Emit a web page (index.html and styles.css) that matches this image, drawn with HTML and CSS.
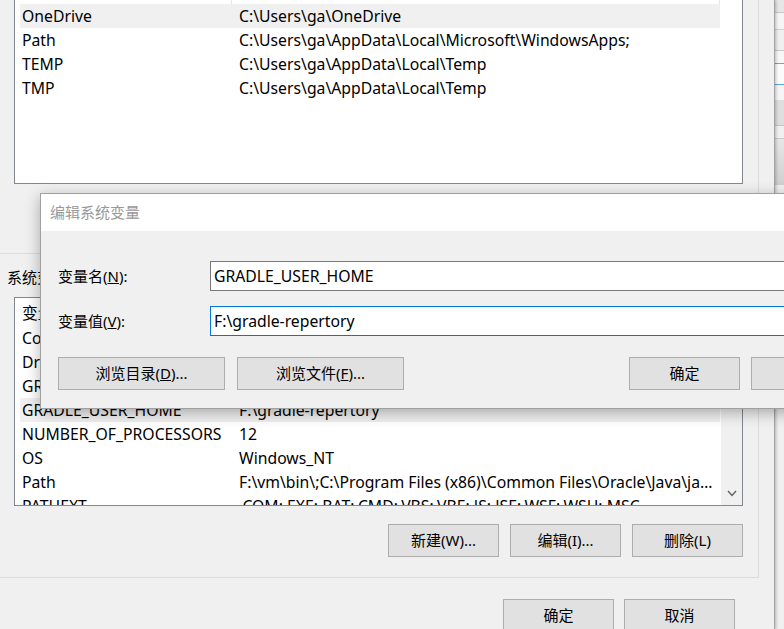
FILE: index.html
```html
<!DOCTYPE html>
<html lang="zh-CN">
<head>
<meta charset="UTF-8" />
<title>环境变量</title>
<link rel="stylesheet" href="styles.css">
</head>
<body>

<div class="screen">
  <div class="win">
    <div class="group group-user">
      <div class="list">
        <div class="list-body">
          <div class="list-head"><span class="c1">变量</span><span class="c2">值</span></div>
          <div class="row sel"><span class="c1">OneDrive</span><span class="c2">C:\Users\ga\OneDrive</span></div>
          <div class="row"><span class="c1">Path</span><span class="c2">C:\Users\ga\AppData\Local\Microsoft\WindowsApps;</span></div>
          <div class="row"><span class="c1">TEMP</span><span class="c2">C:\Users\ga\AppData\Local\Temp</span></div>
          <div class="row"><span class="c1">TMP</span><span class="c2">C:\Users\ga\AppData\Local\Temp</span></div>
        </div>
      </div>
      <div class="btn-row">
        <button class="btn">新建(N)...</button>
        <button class="btn">编辑(E)...</button>
        <button class="btn">删除(D)</button>
      </div>
    </div>

    <div class="group group-sys">
      <div class="group-label">系统变量(<u>S</u>)</div>
      <div class="list">
        <div class="list-body">
          <div class="list-head"><span class="c1">变量</span><span class="c2">值</span></div>
          <div class="row"><span class="c1">ComSpec</span><span class="c2">C:\Windows\system32\cmd.exe</span></div>
          <div class="row"><span class="c1">DriverData</span><span class="c2">C:\Windows\System32\Drivers\DriverData</span></div>
          <div class="row"><span class="c1">GRADLE_HOME</span><span class="c2">F:\gradle-6.5</span></div>
          <div class="row sel"><span class="c1">GRADLE_USER_HOME</span><span class="c2">F:\gradle-repertory</span></div>
          <div class="row"><span class="c1">NUMBER_OF_PROCESSORS</span><span class="c2">12</span></div>
          <div class="row"><span class="c1">OS</span><span class="c2">Windows_NT</span></div>
          <div class="row"><span class="c1">Path</span><span class="c2">F:\vm\bin\;C:\Program Files (x86)\Common Files\Oracle\Java\javapath;C:\Windows\system32</span></div>
          <div class="row"><span class="c1">PATHEXT</span><span class="c2">.COM;.EXE;.BAT;.CMD;.VBS;.VBE;.JS;.JSE;.WSF;.WSH;.MSC</span></div>
        </div>
        <div class="scrollbar">
          <svg width="10" height="7" viewBox="0 0 10 7"><polyline points="1,1 5,5.5 9,1" fill="none" stroke="#606060" stroke-width="1.4"/></svg>
        </div>
      </div>
      <div class="btn-row">
        <button class="btn">新建(W)...</button>
        <button class="btn">编辑(I)...</button>
        <button class="btn">删除(L)</button>
      </div>
    </div>

    <div class="footer">
      <button class="btn">确定</button>
      <button class="btn">取消</button>
    </div>
  </div>

  <div class="behind"></div>

  <!-- 编辑系统变量 对话框 -->
  <div class="dialog">
    <div class="dlg-title">编辑系统变量</div>
    <div class="dlg-body">
      <div class="field">
        <label>变量名(<u>N</u>):</label>
        <input class="input" type="text" value="GRADLE_USER_HOME">
      </div>
      <div class="field">
        <label>变量值(<u>V</u>):</label>
        <input class="input focus" type="text" value="F:\gradle-repertory">
      </div>
      <div class="dlg-buttons">
        <button class="btn wide">浏览目录(<u>D</u>)...</button>
        <button class="btn wide">浏览文件(<u>F</u>)...</button>
        <div class="dlg-ok">
          <button class="btn">确定</button>
          <button class="btn">取消</button>
        </div>
      </div>
    </div>
  </div>
</div>

</body>
</html>
```

FILE: styles.css
```css
* {
  box-sizing: border-box;
}
body {
  margin: 0;
  background: #f0f0f0;
  font-family: "Noto Sans", "Noto Sans CJK SC", sans-serif;
  font-size: 15px;
  color: #000;
}
.screen {
  position: relative;
  display: flex;
  width: 784px;
  height: 629px;
  overflow: hidden;
}
.win {
  width: 775px;
  flex-shrink: 0;
  background: #f0f0f0;
  border-right: 1px solid #a3a3a3;
  box-shadow: 1px 0 3px rgba(0,0,0,0.25);
  position: relative;
  z-index: 1;
}
.group {
  width: 759px;
  border-right: 1px solid #dcdcdc;
  border-bottom: 1px solid #dcdcdc;
}
.group-user {
  margin-top: -25px;
  padding-bottom: 19px;
}
.group-sys {
  padding-top: 11px;
  padding-bottom: 20px;
}
.group-label {
  margin-left: 7px;
  line-height: 24px;
  margin-bottom: 8px;
}
/* 列表 */
.list {
  margin-left: 14px;
  width: 729px;
  height: 209px;
  border: 1px solid #828790;
  background: #fff;
  display: flex;
  overflow: hidden;
}
.list-body {
  flex: 1;
  padding-left: 5px;
  font-size: 15.75px;
}
.list-head {
  display: flex;
  width: 700px;
  height: 28px;
}
.list-head span {
  display: flex;
  align-items: center;
  border-right: 1px solid #e5e5e5;
}
.row {
  display: flex;
  width: 700px;
  line-height: 24px;
}
.row.sel {
  background: #f0f0f0;
}
.c1 {
  width: 212px;
  flex-shrink: 0;
  padding-left: 2px;
  white-space: nowrap;
}
.c2 {
  width: 488px;
  flex-shrink: 0;
  padding-left: 7px;
  padding-right: 5px;
  white-space: nowrap;
  overflow: hidden;
  text-overflow: ellipsis;
}
.scrollbar {
  width: 21px;
  background: #f0f0f0;
  display: flex;
  align-items: flex-end;
  justify-content: center;
  padding-bottom: 8px;
}
/* 按钮 */
.btn {
  width: 111px;
  height: 33px;
  padding: 0 0 2px;
  background: #e1e1e1;
  border: 1px solid #adadad;
  font: inherit;
  color: #000;
  display: flex;
  align-items: center;
  justify-content: center;
}
.btn-row {
  display: flex;
  justify-content: flex-end;
  gap: 11px;
  width: 729px;
  margin-left: 14px;
  margin-top: 17px;
}
.group-sys .btn-row {
  margin-top: 18px;
}
.footer {
  display: flex;
  justify-content: flex-end;
  gap: 10px;
  padding-right: 39px;
  margin-top: 21px;
}
/* 后面的窗口 */
.behind {
  flex: 1;
  background: linear-gradient(to bottom,
    #e6e6e6 0, #e6e6e6 12px, #c8c8c8 12px, #c8c8c8 13px,
    #f5f5f5 13px, #f5f5f5 29px, #d0d0d0 29px, #d0d0d0 30px,
    #efefef 30px, #efefef 50px, #c8c8c8 50px, #c8c8c8 51px,
    #f7f7f7 51px, #f7f7f7 63px, #5ea6e6 63px, #5ea6e6 64px,
    #fbfbfb 64px, #fbfbfb 84px, #5ea6e6 84px, #5ea6e6 85px,
    #f5f5f5 85px, #f5f5f5 100px, #dedede 100px, #dedede 125px,
    #c4c4c4 125px, #c4c4c4 126px, #f0f0f0 126px, #f0f0f0 138px,
    #c8c8c8 138px, #c8c8c8 139px, #e6e6e6 139px, #cfcfcf 185px,
    #f0f0f0 185px);
}
/* 对话框 */
.dialog {
  position: absolute;
  left: 40px;
  top: 193px;
  width: 840px;
  height: 216px;
  background: #f0f0f0;
  border: 1px solid #a0a0a0;
  box-shadow: 0 4px 14px rgba(0,0,0,0.3);
  z-index: 2;
}
.dlg-title {
  height: 37px;
  line-height: 37px;
  padding-left: 9px;
  background: #fff;
  color: #999;
}
.dlg-body {
  padding: 30px 17px 0;
}
.field {
  display: flex;
  align-items: center;
}
.field + .field {
  margin-top: 15px;
}
.field label {
  width: 152px;
  flex-shrink: 0;
  line-height: 24px;
}
.input {
  flex: 1;
  height: 30px;
  padding: 0 3px;
  border: 1px solid #7a7a7a;
  background: #fff;
  font: inherit;
  font-size: 15.75px;
  color: #000;
  outline: none;
}
.input.focus {
  border-color: #0078d7;
}
.dlg-buttons {
  display: flex;
  gap: 12px;
  margin-top: 21px;
}
.btn.wide {
  width: 167px;
}
.dlg-ok {
  display: flex;
  gap: 11px;
  margin-left: auto;
}
```
